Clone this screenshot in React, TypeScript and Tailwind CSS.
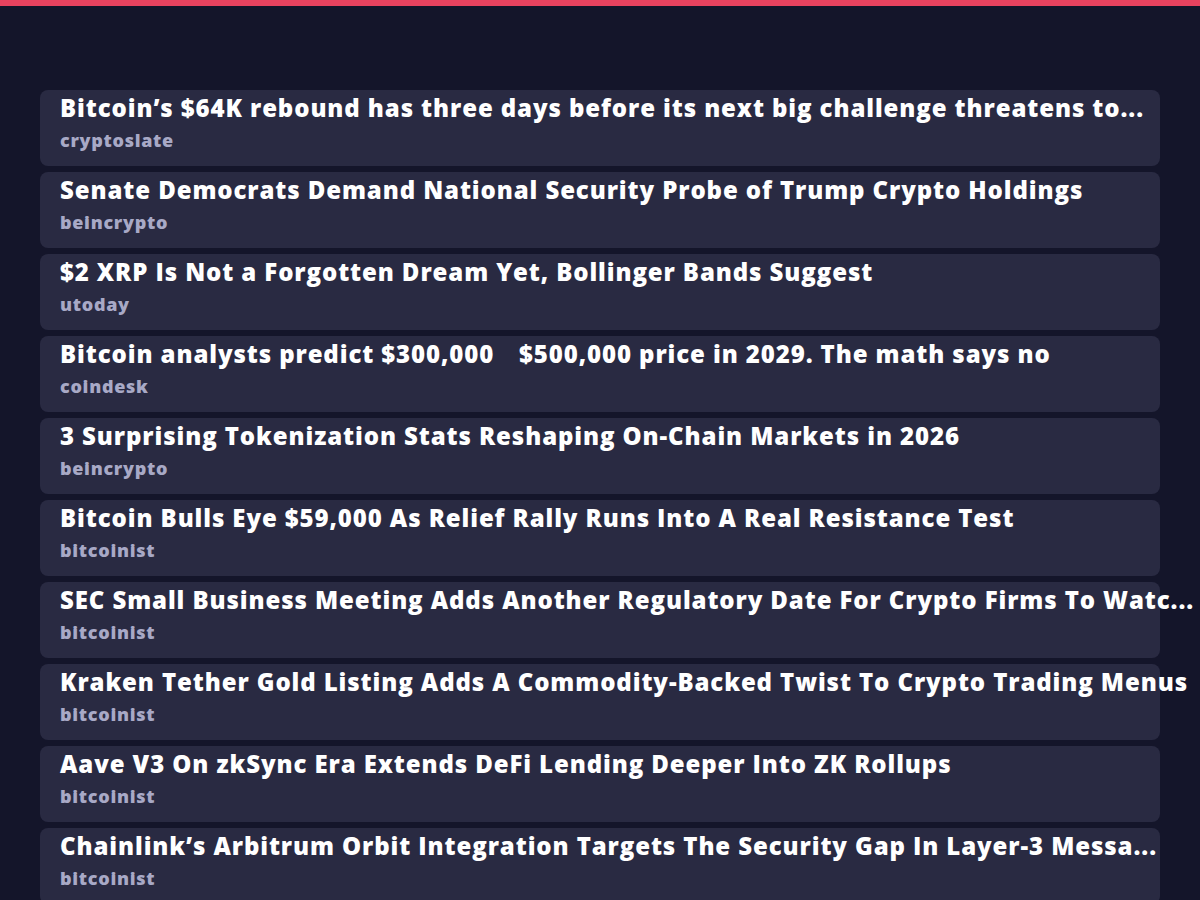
type NewsItem = {
    title: string,
    source: string
}

const news: NewsItem[] = [
    { title: "Bitcoin’s $64K rebound has three days before its next big challenge threatens to derail the recovery", source: "cryptoslate" },
    { title: "Senate Democrats Demand National Security Probe of Trump Crypto Holdings", source: "beincrypto" },
    { title: "$2 XRP Is Not a Forgotten Dream Yet, Bollinger Bands Suggest", source: "utoday" },
    { title: "Bitcoin analysts predict $300,000\u2002 \u2009$500,000 price in 2029. The math says no", source: "coindesk" },
    { title: "3 Surprising Tokenization Stats Reshaping On-Chain Markets in 2026", source: "beincrypto" },
    { title: "Bitcoin Bulls Eye $59,000 As Relief Rally Runs Into A Real Resistance Test", source: "bitcoinist" },
    { title: "SEC Small Business Meeting Adds Another Regulatory Date For Crypto Firms To Watch Closely", source: "bitcoinist" },
    { title: "Kraken Tether Gold Listing Adds A Commodity-Backed Twist To Crypto Trading Menus", source: "bitcoinist" },
    { title: "Aave V3 On zkSync Era Extends DeFi Lending Deeper Into ZK Rollups", source: "bitcoinist" },
    { title: "Chainlink’s Arbitrum Orbit Integration Targets The Security Gap In Layer-3 Messaging", source: "bitcoinist" },
]

// titles are cut by length, not by the card width
const truncate = (s: string, max = 80) => s.length > max ? s.slice(0, max) + "..." : s

const NewsCard = ({ title, source }: NewsItem) => {
    return (
        <div className="bg-[#292a42] rounded-lg pl-5 pt-[2px] h-[76px] shrink-0">
            <div className="text-white text-[24px] leading-[32px] font-extrabold whitespace-nowrap tracking-[0.9px]">
                {truncate(title)}
            </div>
            <div className="mt-[3px] text-[#a8a9c6] text-[18px] leading-[26px] font-extrabold tracking-[0.7px]">
                {source}
            </div>
        </div>
    )
}

export default function App() {
    return (
        <div className="h-[900px] overflow-hidden bg-[#14152a] font-['Open_Sans',sans-serif]">
            <div className="h-[6px] bg-[#e8425f]" />
            <div className="px-10 pt-[84px] flex flex-col gap-[6px]">
                {news.map((n, i) => (
                    <NewsCard key={i} title={n.title} source={n.source} />
                ))}
            </div>
        </div>
    )
}
